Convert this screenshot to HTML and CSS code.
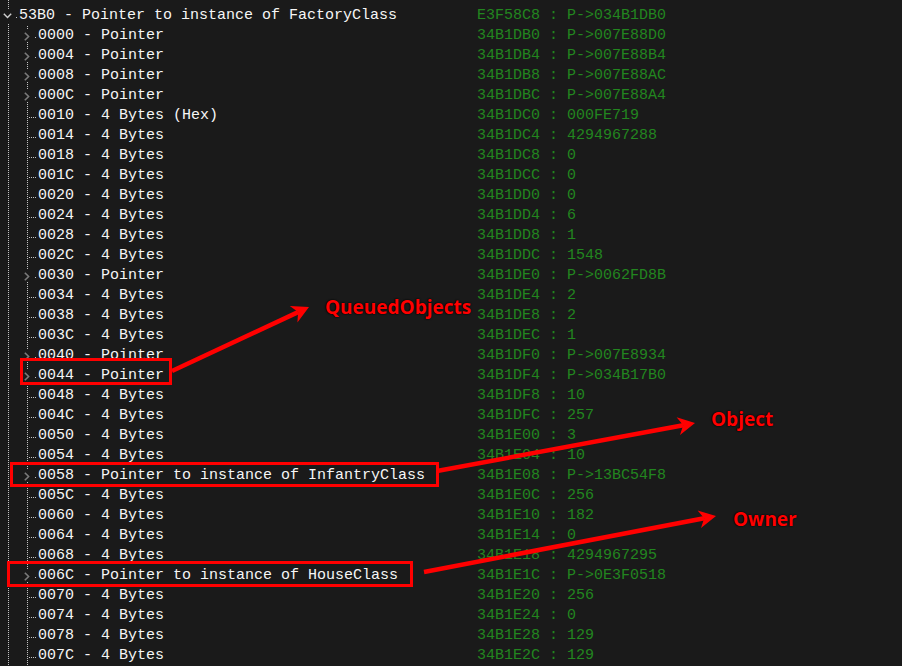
FILE: index.html
```html
<!DOCTYPE html>
<html>
<head>
<meta charset="utf-8">
<link rel="stylesheet" href="styles.css">
</head>
<body>
<div class="screen">
  <div class="tree">
    <div class="row root">
      <div class="name">
        <span class="exp-root"><svg width="9" height="6" viewBox="0 0 9 6"><path d="M0.8 0.8 L4.5 4.6 L8.2 0.8" fill="none" stroke="#d0d0d0" stroke-width="1.4"/></svg></span>
        <span class="dot"></span>
        <span class="label">53B0 - Pointer to instance of FactoryClass</span>
      </div>
      <div class="val">E3F58C8 : P-&gt;034B1DB0</div>
    </div>
    <div class="children">
      <div class="row ptr"><div class="name"><span class="chev"><svg width="6" height="9" viewBox="0 0 6 9"><path d="M0.8 0.8 L4.6 4.5 L0.8 8.2" fill="none" stroke="#7a7a7a" stroke-width="1.6"/></svg></span><span class="dot"></span><span class="label">0000 - Pointer</span></div><div class="val">34B1DB0 : P-&gt;007E88D0</div></div>
      <div class="row ptr"><div class="name"><span class="chev"><svg width="6" height="9" viewBox="0 0 6 9"><path d="M0.8 0.8 L4.6 4.5 L0.8 8.2" fill="none" stroke="#7a7a7a" stroke-width="1.6"/></svg></span><span class="dot"></span><span class="label">0004 - Pointer</span></div><div class="val">34B1DB4 : P-&gt;007E88B4</div></div>
      <div class="row ptr"><div class="name"><span class="chev"><svg width="6" height="9" viewBox="0 0 6 9"><path d="M0.8 0.8 L4.6 4.5 L0.8 8.2" fill="none" stroke="#7a7a7a" stroke-width="1.6"/></svg></span><span class="dot"></span><span class="label">0008 - Pointer</span></div><div class="val">34B1DB8 : P-&gt;007E88AC</div></div>
      <div class="row ptr"><div class="name"><span class="chev"><svg width="6" height="9" viewBox="0 0 6 9"><path d="M0.8 0.8 L4.6 4.5 L0.8 8.2" fill="none" stroke="#7a7a7a" stroke-width="1.6"/></svg></span><span class="dot"></span><span class="label">000C - Pointer</span></div><div class="val">34B1DBC : P-&gt;007E88A4</div></div>
      <div class="row leaf"><div class="name"><span class="twig"></span><span class="label">0010 - 4 Bytes (Hex)</span></div><div class="val">34B1DC0 : 000FE719</div></div>
      <div class="row leaf"><div class="name"><span class="twig"></span><span class="label">0014 - 4 Bytes</span></div><div class="val">34B1DC4 : 4294967288</div></div>
      <div class="row leaf"><div class="name"><span class="twig"></span><span class="label">0018 - 4 Bytes</span></div><div class="val">34B1DC8 : 0</div></div>
      <div class="row leaf"><div class="name"><span class="twig"></span><span class="label">001C - 4 Bytes</span></div><div class="val">34B1DCC : 0</div></div>
      <div class="row leaf"><div class="name"><span class="twig"></span><span class="label">0020 - 4 Bytes</span></div><div class="val">34B1DD0 : 0</div></div>
      <div class="row leaf"><div class="name"><span class="twig"></span><span class="label">0024 - 4 Bytes</span></div><div class="val">34B1DD4 : 6</div></div>
      <div class="row leaf"><div class="name"><span class="twig"></span><span class="label">0028 - 4 Bytes</span></div><div class="val">34B1DD8 : 1</div></div>
      <div class="row leaf"><div class="name"><span class="twig"></span><span class="label">002C - 4 Bytes</span></div><div class="val">34B1DDC : 1548</div></div>
      <div class="row ptr"><div class="name"><span class="chev"><svg width="6" height="9" viewBox="0 0 6 9"><path d="M0.8 0.8 L4.6 4.5 L0.8 8.2" fill="none" stroke="#7a7a7a" stroke-width="1.6"/></svg></span><span class="dot"></span><span class="label">0030 - Pointer</span></div><div class="val">34B1DE0 : P-&gt;0062FD8B</div></div>
      <div class="row leaf"><div class="name"><span class="twig"></span><span class="label">0034 - 4 Bytes</span></div><div class="val">34B1DE4 : 2</div></div>
      <div class="row leaf"><div class="name"><span class="twig"></span><span class="label">0038 - 4 Bytes</span></div><div class="val">34B1DE8 : 2</div></div>
      <div class="row leaf"><div class="name"><span class="twig"></span><span class="label">003C - 4 Bytes</span></div><div class="val">34B1DEC : 1</div></div>
      <div class="row ptr"><div class="name"><span class="chev"><svg width="6" height="9" viewBox="0 0 6 9"><path d="M0.8 0.8 L4.6 4.5 L0.8 8.2" fill="none" stroke="#7a7a7a" stroke-width="1.6"/></svg></span><span class="dot"></span><span class="label">0040 - Pointer</span></div><div class="val">34B1DF0 : P-&gt;007E8934</div></div>
      <div class="row ptr"><div class="name"><span class="chev"><svg width="6" height="9" viewBox="0 0 6 9"><path d="M0.8 0.8 L4.6 4.5 L0.8 8.2" fill="none" stroke="#7a7a7a" stroke-width="1.6"/></svg></span><span class="dot"></span><span class="label">0044 - Pointer</span></div><div class="val">34B1DF4 : P-&gt;034B17B0</div></div>
      <div class="row leaf"><div class="name"><span class="twig"></span><span class="label">0048 - 4 Bytes</span></div><div class="val">34B1DF8 : 10</div></div>
      <div class="row leaf"><div class="name"><span class="twig"></span><span class="label">004C - 4 Bytes</span></div><div class="val">34B1DFC : 257</div></div>
      <div class="row leaf"><div class="name"><span class="twig"></span><span class="label">0050 - 4 Bytes</span></div><div class="val">34B1E00 : 3</div></div>
      <div class="row leaf"><div class="name"><span class="twig"></span><span class="label">0054 - 4 Bytes</span></div><div class="val">34B1E04 : 10</div></div>
      <div class="row ptr"><div class="name"><span class="chev"><svg width="6" height="9" viewBox="0 0 6 9"><path d="M0.8 0.8 L4.6 4.5 L0.8 8.2" fill="none" stroke="#7a7a7a" stroke-width="1.6"/></svg></span><span class="dot"></span><span class="label">0058 - Pointer to instance of InfantryClass</span></div><div class="val">34B1E08 : P-&gt;13BC54F8</div></div>
      <div class="row leaf"><div class="name"><span class="twig"></span><span class="label">005C - 4 Bytes</span></div><div class="val">34B1E0C : 256</div></div>
      <div class="row leaf"><div class="name"><span class="twig"></span><span class="label">0060 - 4 Bytes</span></div><div class="val">34B1E10 : 182</div></div>
      <div class="row leaf"><div class="name"><span class="twig"></span><span class="label">0064 - 4 Bytes</span></div><div class="val">34B1E14 : 0</div></div>
      <div class="row leaf"><div class="name"><span class="twig"></span><span class="label">0068 - 4 Bytes</span></div><div class="val">34B1E18 : 4294967295</div></div>
      <div class="row ptr"><div class="name"><span class="chev"><svg width="6" height="9" viewBox="0 0 6 9"><path d="M0.8 0.8 L4.6 4.5 L0.8 8.2" fill="none" stroke="#7a7a7a" stroke-width="1.6"/></svg></span><span class="dot"></span><span class="label">006C - Pointer to instance of HouseClass</span></div><div class="val">34B1E1C : P-&gt;0E3F0518</div></div>
      <div class="row leaf"><div class="name"><span class="twig"></span><span class="label">0070 - 4 Bytes</span></div><div class="val">34B1E20 : 256</div></div>
      <div class="row leaf"><div class="name"><span class="twig"></span><span class="label">0074 - 4 Bytes</span></div><div class="val">34B1E24 : 0</div></div>
      <div class="row leaf"><div class="name"><span class="twig"></span><span class="label">0078 - 4 Bytes</span></div><div class="val">34B1E28 : 129</div></div>
      <div class="row leaf"><div class="name"><span class="twig"></span><span class="label">007C - 4 Bytes</span></div><div class="val">34B1E2C : 129</div></div>
    </div>
  </div>

  <svg class="marks" width="902" height="666" viewBox="0 0 902 666">
    <g fill="none" stroke="#ff0000" stroke-width="3">
      <rect x="21.5" y="359.5" width="149" height="24"/>
      <rect x="11.5" y="463.5" width="426" height="22"/>
      <rect x="8.5" y="562.5" width="403" height="23"/>
    </g>
    <g stroke="#ff0000" stroke-width="4.5" stroke-linecap="butt">
      <line x1="172" y1="371" x2="298.1" y2="312.1"/>
      <line x1="437" y1="471" x2="683.2" y2="425.2"/>
      <line x1="424" y1="572" x2="704.2" y2="518.3"/>
    </g>
    <g fill="#ff0000">
      <polygon points="309,307 297.4,322.4 298.1,312.1 289.8,306"/>
      <polygon points="695,423 680,434.9 683.2,425.2 676.6,417.3"/>
      <polygon points="716,516 701,528 704.2,518.3 697.6,510.4"/>
    </g>
  </svg>
  <span class="note note-queued">QueuedObjects</span>
  <span class="note note-object">Object</span>
  <span class="note note-owner">Owner</span>
</div>
</body>
</html>
```
FILE: styles.css
```css
html, body {
  margin: 0;
  padding: 0;
  background: #1a1a1a;
}

.screen {
  position: relative;
  width: 902px;
  height: 666px;
  overflow: hidden;
  background: #1a1a1a;
}

.tree {
  padding-top: 6px;
  font-family: "Courier New", "Liberation Mono", monospace;
  font-size: 15px;
  background-image: linear-gradient(to bottom, #c4c4c4 50%, transparent 50%);
  background-size: 1px 2px;
  background-position: 8px 0;
  background-repeat: repeat-y;
}

.children {
  background-image: linear-gradient(to bottom, #c4c4c4 50%, transparent 50%);
  background-size: 1px 2px;
  background-position: 27px 0;
  background-repeat: repeat-y;
}

.row {
  display: grid;
  grid-template-columns: 477px 1fr;
  height: 20px;
  line-height: 20px;
  white-space: pre;
}

.name {
  display: flex;
  align-items: center;
  color: #f6f6f6;
}

.val {
  color: #22861f;
}

.exp-root {
  display: flex;
  align-items: center;
  justify-content: center;
  margin-left: 2px;
  width: 11px;
  height: 14px;
  background: #1a1a1a;
}

.exp-root svg {
  display: block;
}

.root .dot {
  margin-left: 3px;
  margin-right: 2px;
}

.dot {
  width: 1px;
  height: 1px;
  background: #c4c4c4;
  margin-top: 2px;
}

.chev {
  display: flex;
  align-items: center;
  justify-content: center;
  margin-left: 23px;
  width: 8px;
  height: 12px;
  background: #1a1a1a;
}

.chev svg {
  display: block;
}

.ptr .dot {
  margin-left: 4px;
  margin-right: 2px;
}

.twig {
  margin-left: 29px;
  margin-right: 1px;
  width: 8px;
  height: 1px;
  margin-top: 2px;
  background-image: linear-gradient(to right, #c4c4c4 50%, transparent 50%);
  background-size: 2px 1px;
}

.marks {
  position: absolute;
  left: 0;
  top: 0;
  pointer-events: none;
}

.note {
  position: absolute;
  font-family: "Segoe UI", "Open Sans", sans-serif;
  font-weight: 700;
  font-size: 19px;
  line-height: 20px;
  color: #ff0000;
  text-shadow: 0 0 1px #000, 0 0 2px #000;
  white-space: nowrap;
}

.note-queued {
  left: 325px;
  top: 297px;
}

.note-object {
  left: 711px;
  top: 409px;
}

.note-owner {
  left: 733px;
  top: 509px;
}
```
